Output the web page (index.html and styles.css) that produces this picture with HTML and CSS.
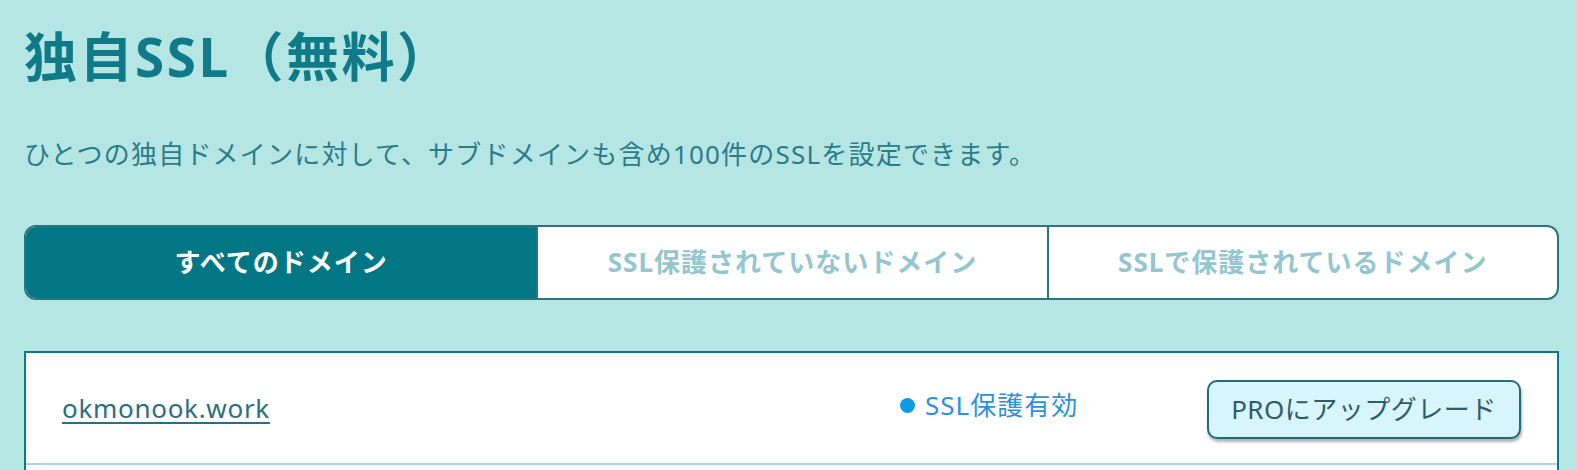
FILE: index.html
```html
<!DOCTYPE html>
<html lang="ja">
<head>
<meta charset="utf-8">
<title>独自SSL（無料）</title>
<link rel="stylesheet" href="styles.css">
</head>
<body>
<main class="page">
  <h1 class="title">独自SSL（無料）</h1>
  <p class="lead">ひとつの独自ドメインに対して、サブドメインも含め100件のSSLを設定できます。</p>

  <nav class="tabs">
    <a class="tab tab-active" href="#">すべてのドメイン</a>
    <a class="tab" href="#">SSL保護されていないドメイン</a>
    <a class="tab" href="#">SSLで保護されているドメイン</a>
  </nav>

  <section class="domain-list">
    <div class="domain-row">
      <a class="domain-link" href="#">okmonook.work</a>
      <div class="status"><span class="status-dot"></span><span class="status-text">SSL保護有効</span></div>
      <button class="upgrade-btn" type="button">PROにアップグレード</button>
    </div>
  </section>
</main>
</body>
</html>
```

FILE: styles.css
```css
html, body {
  margin: 0;
  padding: 0;
  background: #b6e6e4;
}

body {
  font-family: "Noto Sans", "Noto Sans CJK JP", sans-serif;
  color: #1f7a87;
}

.page {
  padding: 26px 18px 0 24px;
}

.title {
  margin: 0;
  font-size: 53px;
  line-height: 62px;
  font-weight: 700;
  letter-spacing: 2.5px;
  color: #0f7a88;
}

.lead {
  margin: 48px 0 0;
  font-size: 26px;
  line-height: 36px;
  letter-spacing: 1.2px;
  color: #2a7c89;
  font-weight: 400;
}

.tabs {
  margin-top: 53px;
  display: grid;
  grid-template-columns: repeat(3, 1fr);
  height: 75px;
  box-sizing: border-box;
  border: 2px solid #2b7581;
  border-radius: 12px;
  overflow: hidden;
  background: #ffffff;
}

.tab {
  display: flex;
  align-items: center;
  justify-content: center;
  padding-bottom: 4px;
  font-size: 26px;
  font-weight: 700;
  letter-spacing: 1px;
  color: #93c6cf;
  text-decoration: none;
  border-left: 2px solid #2b7581;
}

.tab:first-child {
  border-left: none;
}

.tab-active {
  background: #017786;
  color: #ffffff;
}

.domain-list {
  margin-top: 51px;
  background: #ffffff;
  border: 2px solid #0b7787;
  border-bottom: none;
  padding-bottom: 60px;
}

.domain-row {
  display: flex;
  align-items: center;
  height: 110px;
  padding: 0 36px;
  border-bottom: 2px solid #a8d6db;
}

.domain-link {
  flex: 1;
  font-size: 26px;
  line-height: 36px;
  letter-spacing: 0.7px;
  color: #2b6e7f;
  text-decoration: underline;
  text-decoration-thickness: 1.5px;
  text-underline-offset: 4px;
}

.status {
  width: 307px;
  display: flex;
  align-items: center;
  gap: 10px;
  padding-bottom: 6px;
}

.status-dot {
  width: 15px;
  height: 15px;
  border-radius: 50%;
  background: #0d9ae4;
  flex: none;
}

.status-text {
  font-size: 26px;
  line-height: 36px;
  letter-spacing: 1px;
  color: #3090dc;
}

.upgrade-btn {
  width: 314px;
  height: 59px;
  margin-top: 3px;
  box-sizing: border-box;
  border: 2px solid #1f6c79;
  border-radius: 10px;
  background: #d9f5fc;
  box-shadow: 1px 3px 3px rgba(0, 0, 0, 0.3);
  font-family: "Noto Sans", "Noto Sans CJK JP", sans-serif;
  font-size: 26px;
  letter-spacing: 0.5px;
  color: #2e5c68;
  padding: 0 0 4px;
  cursor: pointer;
}
```
